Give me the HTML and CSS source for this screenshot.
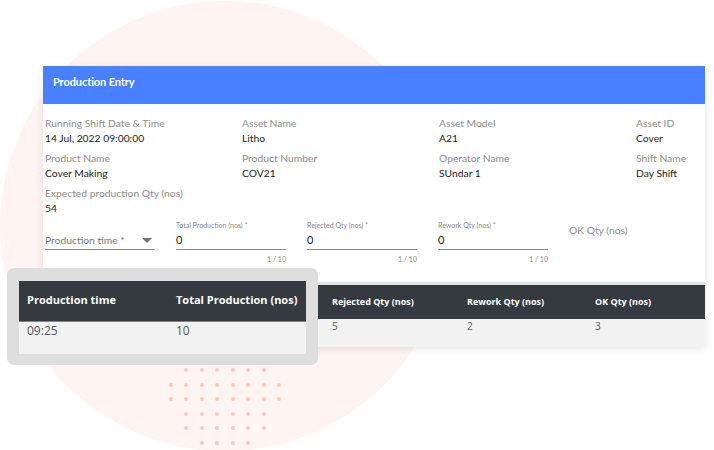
FILE: index.html
```html
<!DOCTYPE html>
<html>
<head>
<meta charset="utf-8">
<link rel="stylesheet" href="styles.css">
</head>
<body>
<div class="stage">
  <div class="blob"></div>
  <div class="dots">
    <div class="dot-row"><i></i><i></i><i></i><i></i><i></i><i></i></div>
    <div class="dot-row"><i></i><i></i><i></i><i></i><i></i><i></i><i></i><i></i></div>
    <div class="dot-row"><i></i><i></i><i></i><i></i><i></i><i></i><i></i><i></i></div>
    <div class="dot-row"><i></i><i></i><i></i><i></i><i></i><i></i></div>
    <div class="dot-row"><i></i><i></i><i></i><i></i><i></i><i></i></div>
    <div class="dot-row"><i></i><i></i><i></i><i></i></div>
  </div>

  <div class="card">
    <div class="card-head">Production Entry</div>
    <div class="info">
      <div class="item"><div class="lbl">Running Shift Date &amp; Time</div><div class="val">14 Jul, 2022 09:00:00</div></div>
      <div class="item"><div class="lbl">Asset Name</div><div class="val">Litho</div></div>
      <div class="item"><div class="lbl">Asset Model</div><div class="val">A21</div></div>
      <div class="item"><div class="lbl">Asset ID</div><div class="val">Cover</div></div>
      <div class="item"><div class="lbl">Product Name</div><div class="val">Cover Making</div></div>
      <div class="item"><div class="lbl">Product Number</div><div class="val">COV21</div></div>
      <div class="item"><div class="lbl">Operator Name</div><div class="val">SUndar 1</div></div>
      <div class="item"><div class="lbl">Shift Name</div><div class="val">Day Shift</div></div>
      <div class="item wide"><div class="lbl">Expected production Qty (nos)</div><div class="val">54</div></div>
    </div>
    <div class="fields">
      <div class="field select">
        <div class="sel-line"><span>Production time *</span><svg class="caret" width="10" height="5" viewBox="0 0 10 5"><path d="M0 0 L10 0 L5 5 Z" fill="#757575"/></svg></div>
      </div>
      <div class="field">
        <div class="f-lbl">Total Production (nos) *</div>
        <div class="f-val">0</div>
        <div class="f-count">1 / 10</div>
      </div>
      <div class="field">
        <div class="f-lbl">Rejected Qty (nos) *</div>
        <div class="f-val">0</div>
        <div class="f-count">1 / 10</div>
      </div>
      <div class="field">
        <div class="f-lbl">Rework Qty (nos) *</div>
        <div class="f-val">0</div>
        <div class="f-count">1 / 10</div>
      </div>
      <div class="field ok">
        <div class="ok-lbl">OK Qty (nos)</div>
      </div>
    </div>
    <table class="tbl">
      <thead>
        <tr><th class="c1"></th><th class="c2"></th><th class="c3">Rejected Qty (nos)</th><th class="c4">Rework Qty (nos)</th><th>OK Qty (nos)</th></tr>
      </thead>
      <tbody>
        <tr><td></td><td></td><td>5</td><td>2</td><td>3</td></tr>
      </tbody>
    </table>
  </div>

  <div class="zoombox">
    <table class="ztbl">
      <thead><tr><th class="z1">Production time</th><th>Total Production (nos)</th></tr></thead>
      <tbody><tr><td>09:25</td><td>10</td></tr></tbody>
    </table>
  </div>
</div>
</body>
</html>
```
FILE: styles.css
```css
* { box-sizing: border-box; }
html, body { margin: 0; padding: 0; background: #fff; }
.stage {
  position: relative;
  width: 714px;
  height: 450px;
  overflow: hidden;
  padding: 66px 0 0 43px;
  font-family: Lato, "Open Sans", sans-serif;
}
.blob {
  position: absolute;
  left: 0;
  top: 1px;
  width: 450px;
  height: 450px;
  border-radius: 50%;
  background: #fff4f2;
}
.dots {
  position: absolute;
  left: 0;
  top: 368px;
  width: 450px;
  display: flex;
  flex-direction: column;
  align-items: center;
  gap: 10.6px;
}
.dot-row { display: flex; gap: 11.5px; }
.dot-row i { display: block; width: 4px; height: 4px; border-radius: 50%; background: #ffc9b9; }

.card {
  position: relative;
  width: 662px;
  background: #fff;
  box-shadow: 0 2px 8px rgba(0,0,0,0.10);
  overflow: hidden;
}
.card-head {
  height: 38px;
  background: #4880ff;
  color: #fff;
  font-weight: 700;
  font-size: 11px;
  line-height: 32px;
  padding-left: 10px;
  letter-spacing: -0.1px;
}
.info {
  display: grid;
  grid-template-columns: repeat(4, 197px);
  row-gap: 5px;
  padding: 12px 0 0 2px;
}
.item.wide { grid-column: 1 / span 2; }
.lbl { font-size: 10.3px; line-height: 15px; color: #8c8c8c; white-space: nowrap; }
.val { font-size: 10.3px; line-height: 15px; color: #222; white-space: nowrap; }

.fields {
  display: flex;
  gap: 21px;
  padding: 5px 0 0 2px;
}
.field { width: 110px; }
.f-lbl { font-size: 7px; line-height: 9px; color: #8a8a8a; white-space: nowrap; }
.f-val { font-size: 11px; line-height: 18px; color: #222; border-bottom: 1px solid #8a8a8a; padding-top: 1px; }
.f-count { font-size: 7px; line-height: 10px; color: #8a8a8a; text-align: right; margin-top: 4px; }
.select { padding-top: 10px; }
.sel-line {
  display: flex;
  justify-content: space-between;
  align-items: center;
  height: 19px;
  border-bottom: 1px solid #8a8a8a;
  font-size: 10.3px;
  color: #777;
  padding-right: 3px;
}
.ok { padding-top: 3px; }
.ok-lbl { font-size: 10.3px; color: #8c8c8c; white-space: nowrap; }

.tbl {
  margin-top: 18px;
  width: 100%;
  border-collapse: collapse;
  font-family: "Open Sans", sans-serif;
  table-layout: fixed;
}
.tbl th {
  background: #343a40;
  color: #fff;
  font-size: 9px;
  font-weight: 700;
  text-align: left;
  height: 35px;
  padding: 0 10px 1px;
  border-top: 3px solid #dee2e6;
  white-space: nowrap;
}
.tbl .c1 { width: 140px; }
.tbl .c2 { width: 139px; }
.tbl .c3 { width: 135px; }
.tbl .c4 { width: 128px; }
.tbl td {
  background: #f2f2f2;
  font-size: 10px;
  line-height: 14px;
  color: #555;
  padding: 0 10px 14px;
}

.zoombox {
  position: absolute;
  left: 7px;
  top: 268px;
  width: 311px;
  height: 97px;
  background: #dedede;
  border-radius: 7px;
  padding: 13px 12px 12px;
}
.ztbl {
  width: 100%;
  border-collapse: collapse;
  font-family: "Open Sans", sans-serif;
  table-layout: fixed;
}
.ztbl th {
  background: #353a41;
  color: #fff;
  font-size: 11px;
  font-weight: 700;
  text-align: left;
  height: 40px;
  padding: 0 8px 2px;
  border-bottom: 1px solid #7d8389;
  white-space: nowrap;
}
.ztbl .z1 { width: 149px; }
.ztbl td {
  background: #f2f2f2;
  font-size: 12px;
  line-height: 17px;
  color: #555;
  padding: 0 8px 15px;
}
```
